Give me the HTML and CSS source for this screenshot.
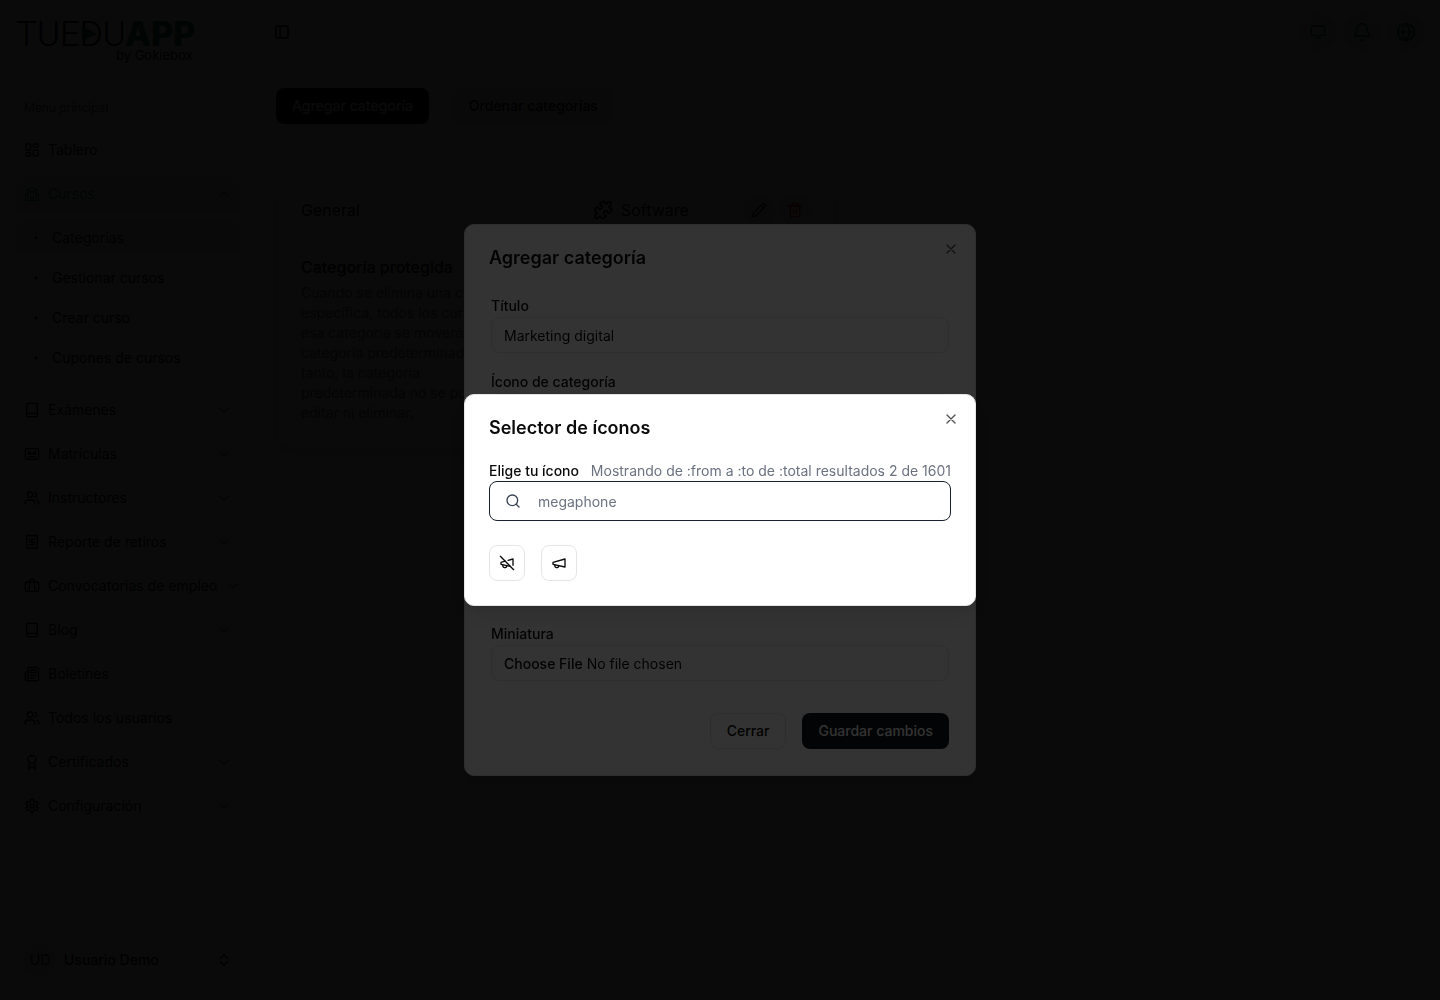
FILE: index.html
```html
<!DOCTYPE html>
<html lang="es">
<head>
<meta charset="utf-8">
<meta name="viewport" content="width=device-width, initial-scale=1">
<title>Categorías de cursos</title>
<link rel="stylesheet" href="styles.css">
</head>
<body>
<svg class="sprite" aria-hidden="true">
  <symbol id="panel" viewBox="0 0 24 24"><rect width="18" height="18" x="3" y="3" rx="2"/><path d="M9 3v18"/></symbol>
  <symbol id="dashboard" viewBox="0 0 24 24"><rect width="7" height="9" x="3" y="3" rx="1"/><rect width="7" height="5" x="14" y="3" rx="1"/><rect width="7" height="9" x="14" y="12" rx="1"/><rect width="7" height="5" x="3" y="16" rx="1"/></symbol>
  <symbol id="school" viewBox="0 0 24 24"><path d="M14 22v-4a2 2 0 1 0-4 0v4"/><path d="m18 10 3.447 1.724a1 1 0 0 1 .553.894V20a2 2 0 0 1-2 2H4a2 2 0 0 1-2-2v-7.382a1 1 0 0 1 .553-.894L6 10"/><path d="M18 5v17M6 5v17"/><path d="m4 6 7.106-3.553a2 2 0 0 1 1.788 0L20 6"/><circle cx="12" cy="9" r="2"/></symbol>
  <symbol id="book" viewBox="0 0 24 24"><path d="M4 19.5v-15A2.5 2.5 0 0 1 6.5 2H19a1 1 0 0 1 1 1v18a1 1 0 0 1-1 1H6.5a1 1 0 0 1 0-5H20"/></symbol>
  <symbol id="cassette" viewBox="0 0 24 24"><rect width="20" height="16" x="2" y="4" rx="2"/><circle cx="8" cy="10" r="2"/><path d="M8 12h8"/><circle cx="16" cy="10" r="2"/><path d="m6 20 .7-2.9A1.4 1.4 0 0 1 8.1 16h7.8a1.4 1.4 0 0 1 1.4 1l.7 3"/></symbol>
  <symbol id="users" viewBox="0 0 24 24"><path d="M16 21v-2a4 4 0 0 0-4-4H6a4 4 0 0 0-4 4v2"/><circle cx="9" cy="7" r="4"/><path d="M22 21v-2a4 4 0 0 0-3-3.87"/><path d="M16 3.13a4 4 0 0 1 0 7.75"/></symbol>
  <symbol id="receipt" viewBox="0 0 24 24"><path d="M4 2v20l2-1 2 1 2-1 2 1 2-1 2 1 2-1 2 1V2l-2 1-2-1-2 1-2-1-2 1-2-1-2 1Z"/><path d="M16 8h-6a2 2 0 1 0 0 4h4a2 2 0 1 1 0 4H8"/><path d="M12 17.5v-11"/></symbol>
  <symbol id="briefcase" viewBox="0 0 24 24"><path d="M16 20V4a2 2 0 0 0-2-2h-4a2 2 0 0 0-2 2v16"/><rect width="20" height="14" x="2" y="6" rx="2"/></symbol>
  <symbol id="newspaper" viewBox="0 0 24 24"><path d="M4 22h16a2 2 0 0 0 2-2V4a2 2 0 0 0-2-2H8a2 2 0 0 0-2 2v16a2 2 0 0 1-2 2Zm0 0a2 2 0 0 1-2-2v-9c0-1.1.9-2 2-2h2"/><path d="M18 14h-8M15 18h-5"/><path d="M10 6h8v4h-8V6Z"/></symbol>
  <symbol id="award" viewBox="0 0 24 24"><path d="m15.477 12.89 1.515 8.526a.5.5 0 0 1-.81.47l-3.58-2.687a1 1 0 0 0-1.197 0l-3.586 2.686a.5.5 0 0 1-.81-.469l1.514-8.526"/><circle cx="12" cy="8" r="6"/></symbol>
  <symbol id="settings" viewBox="0 0 24 24"><path d="M12.22 2h-.44a2 2 0 0 0-2 2v.18a2 2 0 0 1-1 1.73l-.43.25a2 2 0 0 1-2 0l-.15-.08a2 2 0 0 0-2.73.73l-.22.38a2 2 0 0 0 .73 2.73l.15.1a2 2 0 0 1 1 1.72v.51a2 2 0 0 1-1 1.74l-.15.09a2 2 0 0 0-.73 2.73l.22.38a2 2 0 0 0 2.73.73l.15-.08a2 2 0 0 1 2 0l.43.25a2 2 0 0 1 1 1.73V20a2 2 0 0 0 2 2h.44a2 2 0 0 0 2-2v-.18a2 2 0 0 1 1-1.73l.43-.25a2 2 0 0 1 2 0l.15.08a2 2 0 0 0 2.73-.73l.22-.39a2 2 0 0 0-.73-2.73l-.15-.08a2 2 0 0 1-1-1.74v-.5a2 2 0 0 1 1-1.74l.15-.09a2 2 0 0 0 .73-2.73l-.22-.38a2 2 0 0 0-2.73-.73l-.15.08a2 2 0 0 1-2 0l-.43-.25a2 2 0 0 1-1-1.73V4a2 2 0 0 0-2-2z"/><circle cx="12" cy="12" r="3"/></symbol>
  <symbol id="down" viewBox="0 0 24 24"><path d="m6 9 6 6 6-6"/></symbol>
  <symbol id="up" viewBox="0 0 24 24"><path d="m18 15-6-6-6 6"/></symbol>
  <symbol id="updown" viewBox="0 0 24 24"><path d="m7 15 5 5 5-5"/><path d="m7 9 5-5 5 5"/></symbol>
  <symbol id="dot" viewBox="0 0 24 24"><circle cx="12" cy="12" r="1"/></symbol>
  <symbol id="monitor" viewBox="0 0 24 24"><rect width="20" height="14" x="2" y="3" rx="2"/><path d="M8 21h8M12 17v4"/></symbol>
  <symbol id="bell" viewBox="0 0 24 24"><path d="M10.268 21a2 2 0 0 0 3.464 0"/><path d="M3.262 15.326A1 1 0 0 0 4 17h16a1 1 0 0 0 .74-1.673C19.41 13.956 18 12.499 18 8A6 6 0 0 0 6 8c0 4.499-1.411 5.956-2.738 7.326"/></symbol>
  <symbol id="globe" viewBox="0 0 24 24"><circle cx="12" cy="12" r="10"/><path d="M12 2a14.500 14.500 0 0 0 0 20 14.500 14.500 0 0 0 0-20"/><path d="M2 12h20"/></symbol>
  <symbol id="puzzle" viewBox="0 0 24 24"><path d="M15.39 4.39a1 1 0 0 0 1.68-.474 2.500 2.500 0 1 1 3.014 3.015 1 1 0 0 0-.474 1.680l1.683 1.682a2.414 2.414 0 0 1 0 3.414L19.610 15.390a1 1 0 0 1-1.680-.474 2.500 2.500 0 1 0-3.014 3.015 1 1 0 0 1 .474 1.680l-1.683 1.682a2.414 2.414 0 0 1-3.414 0L8.610 19.610a1 1 0 0 0-1.680.474 2.500 2.500 0 1 1-3.014-3.015 1 1 0 0 0 .474-1.680l-1.683-1.682a2.414 2.414 0 0 1 0-3.414L4.390 8.610a1 1 0 0 1 1.680.474 2.500 2.500 0 1 0 3.014-3.015 1 1 0 0 1-.474-1.680l1.683-1.682a2.414 2.414 0 0 1 3.414 0z"/></symbol>
  <symbol id="pencil" viewBox="0 0 24 24"><path d="M21.174 6.812a1 1 0 0 0-3.986-3.987L3.842 16.174a2 2 0 0 0-.5.830l-1.321 4.352a.5.5 0 0 0 .623.622l4.353-1.320a2 2 0 0 0 .830-.497z"/><path d="m15 5 4 4"/></symbol>
  <symbol id="trash" viewBox="0 0 24 24"><path d="M3 6h18M19 6v14c0 1-1 2-2 2H7c-1 0-2-1-2-2V6M8 6V4c0-1 1-2 2-2h4c1 0 2 1 2 2v2M10 11v6M14 11v6"/></symbol>
  <symbol id="close" viewBox="0 0 24 24"><path d="M18 6 6 18M6 6l12 12"/></symbol>
  <symbol id="search" viewBox="0 0 24 24"><circle cx="11" cy="11" r="8"/><path d="m21 21-4.300-4.300"/></symbol>
  <symbol id="megaphone" viewBox="0 0 24 24"><path d="m3 11 18-5v12L3 14v-3z"/><path d="M11.600 16.800a3 3 0 1 1-5.800-1.600"/></symbol>
  <symbol id="megaphone-off" viewBox="0 0 24 24"><path d="M9.260 9.260 3 11v3l14.140 3.140"/><path d="M21 15.340V6l-7.310 2.030"/><path d="M11.600 16.800a3 3 0 1 1-5.800-1.600"/><path d="m2 2 20 20"/></symbol>
</svg>

<div class="app">
  <aside class="sidebar">
    <a class="logo" href="#" aria-label="TUEDUAPP by Gokiebox">
      <svg width="184" height="48" viewBox="0 0 184 48">
        <text class="logo-thin" x="0" y="30">TUEDU</text>
        <text class="logo-bold" x="109" y="30">APP</text>
        <text class="logo-by" x="100" y="44">by Gokiebox</text>
        <path class="logo-play" d="M66 10v15l15-7z"/>
      </svg>
    </a>
    <nav class="nav">
      <p class="nav-title">Menú principal</p>
      <a class="nav-item" href="#"><svg class="icon"><use href="#dashboard"/></svg>Tablero</a>
      <div class="nav-group">
        <button class="nav-item active" type="button" aria-expanded="true"><svg class="icon"><use href="#school"/></svg>Cursos<svg class="icon chevron"><use href="#up"/></svg></button>
        <div class="subnav">
          <a class="sub-item current" href="#"><svg class="icon"><use href="#dot"/></svg>Categorías</a>
          <a class="sub-item" href="#"><svg class="icon"><use href="#dot"/></svg>Gestionar cursos</a>
          <a class="sub-item" href="#"><svg class="icon"><use href="#dot"/></svg>Crear curso</a>
          <a class="sub-item" href="#"><svg class="icon"><use href="#dot"/></svg>Cupones de cursos</a>
        </div>
      </div>
      <button class="nav-item" type="button"><svg class="icon"><use href="#book"/></svg>Exámenes<svg class="icon chevron"><use href="#down"/></svg></button>
      <button class="nav-item" type="button"><svg class="icon"><use href="#cassette"/></svg>Matrículas<svg class="icon chevron"><use href="#down"/></svg></button>
      <button class="nav-item" type="button"><svg class="icon"><use href="#users"/></svg>Instructores<svg class="icon chevron"><use href="#down"/></svg></button>
      <button class="nav-item" type="button"><svg class="icon"><use href="#receipt"/></svg>Reporte de retiros<svg class="icon chevron"><use href="#down"/></svg></button>
      <button class="nav-item" type="button"><svg class="icon"><use href="#briefcase"/></svg>Convocatorias de empleo<svg class="icon chevron"><use href="#down"/></svg></button>
      <button class="nav-item" type="button"><svg class="icon"><use href="#book"/></svg>Blog<svg class="icon chevron"><use href="#down"/></svg></button>
      <a class="nav-item" href="#"><svg class="icon"><use href="#newspaper"/></svg>Boletines</a>
      <a class="nav-item" href="#"><svg class="icon"><use href="#users"/></svg>Todos los usuarios</a>
      <button class="nav-item" type="button"><svg class="icon"><use href="#award"/></svg>Certificados<svg class="icon chevron"><use href="#down"/></svg></button>
      <button class="nav-item" type="button"><svg class="icon"><use href="#settings"/></svg>Configuración<svg class="icon chevron"><use href="#down"/></svg></button>
    </nav>
    <button class="user" type="button"><span class="avatar">UD</span>Usuario Demo<svg class="icon push"><use href="#updown"/></svg></button>
  </aside>

  <div class="page">
    <header class="topbar">
      <button class="toggle" type="button" aria-label="Alternar barra lateral"><svg class="icon"><use href="#panel"/></svg></button>
      <div class="tools">
        <button class="round" type="button" aria-label="Apariencia"><svg class="icon"><use href="#monitor"/></svg></button>
        <button class="round" type="button" aria-label="Notificaciones"><svg class="icon icon-lg"><use href="#bell"/></svg></button>
        <button class="round" type="button" aria-label="Idioma"><svg class="icon icon-lg"><use href="#globe"/></svg></button>
      </div>
    </header>
    <main class="content">
      <div class="actions">
        <button class="btn primary" type="button">Agregar categoría</button>
        <button class="btn secondary" type="button">Ordenar categorías</button>
      </div>
      <hr class="rule">
      <div class="cards">
        <section class="card">
          <div class="card-head"><h2 class="card-title">General</h2></div>
          <div class="card-body">
            <h3 class="note-title">Categoría protegida</h3>
            <p class="note">Cuando se elimina una categoría específica, todos los cursos de esa categoría se moverán a la categoría predeterminada. Por lo tanto, la categoría predeterminada no se puede editar ni eliminar.</p>
          </div>
        </section>
        <section class="card">
          <div class="card-head">
            <svg class="icon icon-lg"><use href="#puzzle"/></svg>
            <h2 class="card-title">Software</h2>
            <div class="card-tools">
              <button class="round small" type="button" aria-label="Editar"><svg class="icon"><use href="#pencil"/></svg></button>
              <button class="round small danger" type="button" aria-label="Eliminar"><svg class="icon"><use href="#trash"/></svg></button>
            </div>
          </div>
        </section>
      </div>
    </main>
  </div>
</div>

<div class="overlay">
  <div class="dialog" role="dialog" aria-labelledby="add-title">
    <button class="dialog-close" type="button" aria-label="Cerrar"><svg class="icon"><use href="#close"/></svg></button>
    <h2 class="dialog-title" id="add-title">Agregar categoría</h2>
    <form class="form">
      <div class="field"><label for="title">Título</label><input class="input" id="title" type="text" value="Marketing digital"></div>
      <div class="field"><label for="icon">Ícono de categoría</label><input class="input" id="icon" type="text"></div>
      <div class="field"><textarea class="input area" id="description" aria-label="Descripción"></textarea></div>
      <div class="field"><label for="thumb">Miniatura</label><input class="input file" id="thumb" type="file"></div>
      <div class="form-actions">
        <button class="btn outline" type="button">Cerrar</button>
        <button class="btn primary" type="button">Guardar cambios</button>
      </div>
    </form>
  </div>
</div>

<div class="overlay">
  <div class="dialog" role="dialog" aria-modal="true" aria-labelledby="picker-title">
    <button class="dialog-close" type="button" aria-label="Cerrar"><svg class="icon"><use href="#close"/></svg></button>
    <h2 class="dialog-title" id="picker-title">Selector de íconos</h2>
    <div class="picker">
      <div class="picker-row"><label for="query">Elige tu ícono</label><span class="count">Mostrando de :from a :to de :total resultados 2 de 1601</span></div>
      <div class="search"><svg class="icon"><use href="#search"/></svg><input class="search-input" id="query" type="text" value="megaphone"></div>
      <div class="results">
        <button class="result" type="button" aria-label="megaphone-off"><svg class="icon"><use href="#megaphone-off"/></svg></button>
        <button class="result" type="button" aria-label="megaphone"><svg class="icon"><use href="#megaphone"/></svg></button>
      </div>
    </div>
  </div>
</div>
</body>
</html>
```
FILE: styles.css
```css
:root {
  --ink: #0a0a0a;
  --muted: #6b7280;
  --line: #e5e5e5;
  --primary: #11161c;
  --brand: #006650;
}
* { box-sizing: border-box; }
body {
  margin: 0;
  background: #fff;
  color: var(--ink);
  font: 400 14px/20px Inter, "Liberation Sans", sans-serif;
}
h2, h3, p { margin: 0; }
button, input, textarea { font: inherit; color: inherit; }
button { border: 0; padding: 0; background: none; white-space: nowrap; }
a { color: inherit; text-decoration: none; }
.sprite { display: none; }
.icon {
  width: 16px;
  height: 16px;
  flex: none;
  fill: none;
  stroke: currentColor;
  stroke-width: 2;
  stroke-linecap: round;
  stroke-linejoin: round;
}
.icon-lg { width: 20px; height: 20px; }

.app { display: flex; min-height: 100vh; }
.sidebar {
  width: 256px;
  flex: none;
  display: flex;
  flex-direction: column;
  padding: 16px 16px 20px;
}
.logo, .logo svg { display: block; }
.logo svg { overflow: visible; }
.logo-thin { font-family: Roboto, sans-serif; font-size: 35px; font-weight: 300; fill: #000; }
.logo-bold { font-size: 34px; font-weight: 800; fill: var(--brand); }
.logo-by { font-size: 13px; fill: #000; }
.logo-play { fill: var(--brand); }

.nav { display: flex; flex-direction: column; gap: 8px; padding-top: 28px; }
.nav-title { padding: 6px 8px; font-size: 12px; color: #525252; }
.nav-item {
  display: flex;
  align-items: center;
  gap: 8px;
  height: 36px;
  padding: 0 8px;
  border-radius: 8px;
}
.nav-group .nav-item { width: 100%; }
.active { background: #f5f5f5; color: var(--brand); }
.chevron { margin-left: auto; color: #525252; }
.subnav { display: flex; flex-direction: column; gap: 8px; padding: 10px 0; }
.sub-item {
  display: flex;
  align-items: center;
  gap: 8px;
  height: 32px;
  padding: 0 12px;
  border-radius: 8px;
}
.current { background: #f5f5f5; }
.user {
  display: flex;
  align-items: center;
  gap: 8px;
  height: 40px;
  margin-top: auto;
  padding: 0 8px;
  font-weight: 500;
}
.avatar {
  width: 32px;
  height: 32px;
  border-radius: 50%;
  background: #f5f5f5;
  line-height: 32px;
  font-weight: 400;
}
.push { margin-left: auto; }

.page { flex: 1; min-width: 0; border-left: 1px solid var(--line); }
.topbar {
  display: flex;
  align-items: center;
  justify-content: space-between;
  height: 64px;
  padding: 0 16px 0 11px;
  border-bottom: 1px solid var(--line);
}
.toggle { display: grid; place-items: center; width: 28px; height: 28px; }
.tools { display: flex; gap: 8px; color: var(--brand); }
.round {
  display: grid;
  place-items: center;
  width: 36px;
  height: 36px;
  border-radius: 50%;
  background: #f3f4f6;
}
.small { width: 32px; height: 32px; }
.danger { color: #e00000; }
.content { padding: 24px 20px 24px 19px; }
.actions { display: flex; gap: 24px; }
.btn { height: 36px; padding: 0 16px; border-radius: 8px; font-weight: 500; }
.primary { background: var(--primary); color: #fafafa; }
.secondary { background: #f3f4f6; }
.outline { border: 1px solid var(--line); background: #fff; }
.rule { height: 1px; margin: 24px 0; border: 0; background: var(--line); }
.cards { display: grid; grid-template-columns: repeat(4, minmax(0, 1fr)); gap: 24px; }
.card {
  border: 1px solid #f0f0f0;
  border-radius: 12px;
  background: #fff;
  box-shadow: 0 6px 20px rgba(0, 0, 0, 0.08);
}
.card-head {
  display: flex;
  align-items: center;
  gap: 8px;
  height: 65px;
  padding: 8px 24px 0;
  border-bottom: 1px solid var(--line);
}
.card-title { font-size: 16px; font-weight: 400; line-height: 24px; }
.card-tools { display: flex; gap: 4px; margin-left: auto; }
.card-body { padding: 16px 24px 24px; }
.note-title { margin-bottom: 4px; font-size: 16px; font-weight: 500; line-height: 24px; }
.note { color: #666; }

.overlay {
  position: fixed;
  inset: 0;
  display: grid;
  place-items: center;
  background: rgba(0, 0, 0, 0.8);
}
.dialog {
  position: relative;
  width: 100%;
  max-width: 512px;
  padding: 24px;
  border: 1px solid var(--line);
  border-radius: 10px;
  background: #fff;
  box-shadow: 0 10px 15px -3px rgba(0, 0, 0, 0.1), 0 4px 6px -4px rgba(0, 0, 0, 0.1);
}
.dialog-close { position: absolute; top: 16px; right: 16px; height: 16px; opacity: 0.7; }
.dialog-close .icon { display: block; }
.dialog-title { font-size: 18px; font-weight: 600; line-height: 18px; }
.form { display: flex; flex-direction: column; gap: 18px; padding: 28px 2px 2px; }
.field { display: flex; flex-direction: column; }
label { font-weight: 500; }
.field label { line-height: 22px; }
.input {
  width: 100%;
  height: 36px;
  padding: 0 12px;
  border: 1px solid var(--line);
  border-radius: 8px;
  background: #fff;
}
.area { height: 158px; resize: none; }
.file { padding: 8px 12px; }
.file::file-selector-button {
  padding: 0;
  border: 0;
  background: none;
  color: inherit;
  font: inherit;
  font-weight: 500;
}
.form-actions { display: flex; justify-content: flex-end; gap: 16px; padding-top: 14px; }

.picker { padding-top: 24px; }
.picker-row { display: flex; justify-content: space-between; white-space: nowrap; }
.count { color: var(--muted); }
.search {
  display: flex;
  align-items: center;
  gap: 16px;
  height: 40px;
  padding: 0 15px;
  border: 1px solid #18212f;
  border-radius: 8px;
  color: #374151;
}
.search-input { flex: 1; min-width: 0; padding: 2px 1px 0; border: 0; outline: 0; background: none; color: var(--muted); }
.results { display: flex; gap: 16px; padding-top: 24px; }
.result {
  display: grid;
  place-items: center;
  width: 36px;
  height: 36px;
  border: 1px solid var(--line);
  border-radius: 8px;
}
```
